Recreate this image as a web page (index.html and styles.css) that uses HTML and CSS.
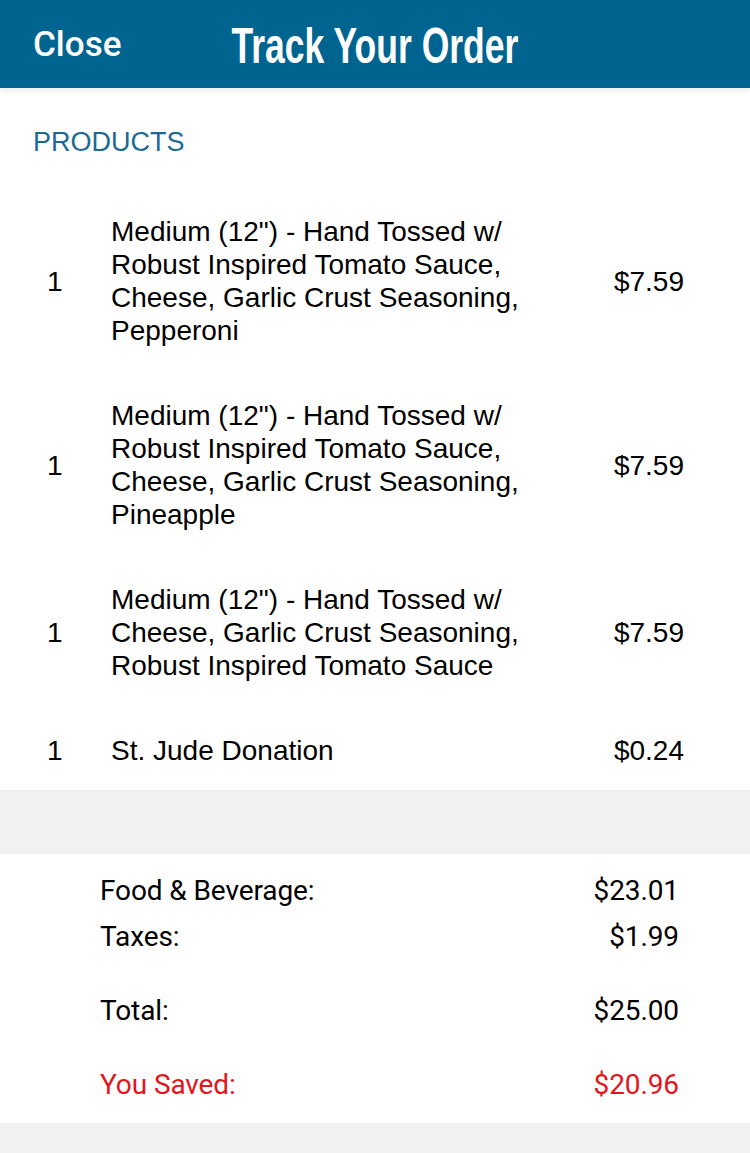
FILE: index.html
```html
<!DOCTYPE html>
<html>
<head>
<meta charset="utf-8">
<link rel="stylesheet" href="styles.css">
</head>
<body>
<header class="topbar">
  <span class="close">Close</span>
  <h1 class="title">Track Your Order</h1>
</header>
<section class="products">
  <div class="label">PRODUCTS</div>
  <div class="item">
    <div class="qty">1</div>
    <div class="desc">Medium (12") - Hand Tossed w/ Robust Inspired Tomato Sauce, Cheese, Garlic Crust Seasoning, Pepperoni</div>
    <div class="price">$7.59</div>
  </div>
  <div class="item">
    <div class="qty">1</div>
    <div class="desc">Medium (12") - Hand Tossed w/ Robust Inspired Tomato Sauce, Cheese, Garlic Crust Seasoning, Pineapple</div>
    <div class="price">$7.59</div>
  </div>
  <div class="item">
    <div class="qty">1</div>
    <div class="desc">Medium (12") - Hand Tossed w/ Cheese, Garlic Crust Seasoning, Robust Inspired Tomato Sauce</div>
    <div class="price">$7.59</div>
  </div>
  <div class="item">
    <div class="qty">1</div>
    <div class="desc">St. Jude Donation</div>
    <div class="price">$0.24</div>
  </div>
</section>
<div class="spacer"></div>
<section class="summary">
  <div class="row"><span>Food &amp; Beverage:</span><span>$23.01</span></div>
  <div class="row"><span>Taxes:</span><span>$1.99</span></div>
  <div class="row gap"><span>Total:</span><span>$25.00</span></div>
  <div class="row gap saved"><span>You Saved:</span><span>$20.96</span></div>
</section>
</body>
</html>
```
FILE: styles.css
```css
html, body {
  margin: 0;
  padding: 0;
}
body {
  background: #f1f1f1;
  font-family: "Liberation Sans", Arial, sans-serif;
  color: #000;
  width: 750px;
}
.topbar {
  position: relative;
  height: 88px;
  background: #006491;
  display: flex;
  align-items: center;
  justify-content: center;
  box-shadow: 0 3px 6px rgba(0,0,0,0.08);
  z-index: 1;
}
.close {
  position: absolute;
  left: 33px;
  top: 24px;
  font-family: Roboto, "Liberation Sans", sans-serif;
  font-weight: 500;
  font-size: 35px;
  line-height: 42px;
  color: #fff;
}
.title {
  margin: 4px 0 0 0;
  font-family: "Liberation Sans", Arial, sans-serif;
  font-weight: bold;
  font-size: 50px;
  line-height: 60px;
  color: #fff;
  transform: scaleX(0.71);
  white-space: nowrap;
}
.products {
  background: #fff;
  padding-top: 38px;
}
.label {
  padding-left: 33px;
  font-size: 27px;
  line-height: 33px;
  color: #1c6a93;
  margin-bottom: 30px;
}
.item {
  display: grid;
  grid-template-columns: 111px 440px 1fr;
  align-items: center;
  padding: 26px 66px 26px 0;
  font-size: 28px;
  line-height: 33px;
}
.item:last-child {
  padding-bottom: 23px;
}
.qty {
  padding-left: 47px;
}
.price {
  text-align: right;
}
.spacer {
  height: 64px;
}
.summary {
  background: #fff;
  padding: 20px 71px 21px 100px;
  font-family: Roboto, "Liberation Sans", sans-serif;
  font-size: 28px;
  line-height: 34px;
  letter-spacing: -0.1px;
}
.row {
  display: flex;
  justify-content: space-between;
  margin-top: 12px;
}
.row:first-child {
  margin-top: 0;
}
.row.gap {
  margin-top: 40px;
}
.saved {
  color: #e4141b;
}
```
